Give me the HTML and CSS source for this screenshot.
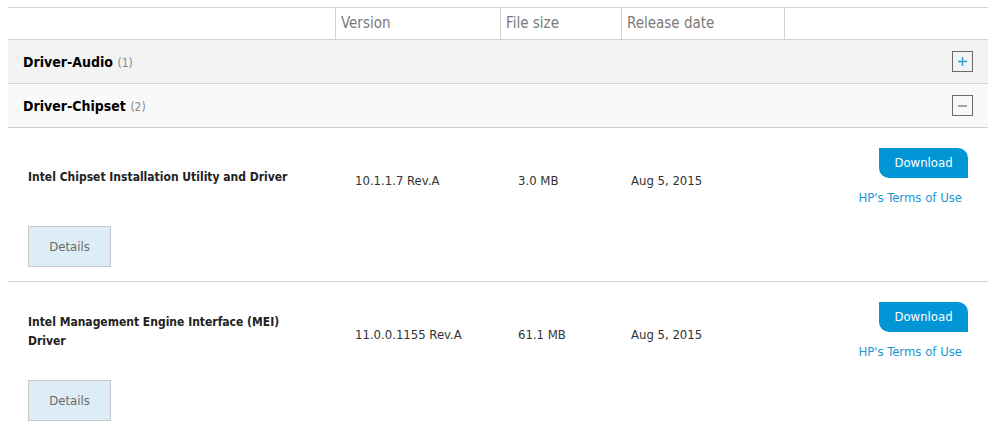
FILE: index.html
```html
<!DOCTYPE html>
<html lang="en">
<head>
<meta charset="utf-8">
<title>Drivers</title>
<link rel="stylesheet" href="styles.css">
</head>
<body>
<div class="drivers">
  <div class="thead">
    <div class="th"></div>
    <div class="th">Version</div>
    <div class="th">File size</div>
    <div class="th">Release date</div>
    <div class="th"></div>
  </div>

  <div class="group group-closed">
    <div class="group-title"><span class="group-name">Driver-Audio</span> <span class="count">(1)</span></div>
    <span class="toggle">
      <svg width="21" height="21" viewBox="0 0 21 21"><rect x="0.5" y="0.5" width="20" height="20" fill="none" stroke="#6b6b6b"/><path d="M6 10.5h9M10.5 6v9" stroke="#2a9fd8" stroke-width="1.5"/></svg>
    </span>
  </div>

  <div class="group group-open">
    <div class="group-title"><span class="group-name">Driver-Chipset</span> <span class="count">(2)</span></div>
    <span class="toggle">
      <svg width="21" height="21" viewBox="0 0 21 21"><rect x="0.5" y="0.5" width="20" height="20" fill="none" stroke="#6b6b6b"/><path d="M6 11h9" stroke="#8a8a8a" stroke-width="1.5"/></svg>
    </span>
  </div>

  <div class="item">
    <div class="item-main">
      <div class="c-name">Intel Chipset Installation Utility and Driver</div>
      <div class="c-ver">10.1.1.7 Rev.A</div>
      <div class="c-size">3.0 MB</div>
      <div class="c-date">Aug 5, 2015</div>
      <div class="c-actions">
        <a class="btn-download" href="#">Download</a>
        <a class="terms" href="#">HP's Terms of Use</a>
      </div>
    </div>
    <button class="btn-details" type="button">Details</button>
  </div>

  <div class="item">
    <div class="item-main">
      <div class="c-name">Intel Management Engine Interface (MEI) Driver</div>
      <div class="c-ver">11.0.0.1155 Rev.A</div>
      <div class="c-size">61.1 MB</div>
      <div class="c-date">Aug 5, 2015</div>
      <div class="c-actions">
        <a class="btn-download" href="#">Download</a>
        <a class="terms" href="#">HP's Terms of Use</a>
      </div>
    </div>
    <button class="btn-details" type="button">Details</button>
  </div>
</div>
</body>
</html>
```

FILE: styles.css
```css
* { box-sizing: border-box; }

body {
  margin: 0;
  background: #fff;
  font-family: "DejaVu Sans Condensed", "DejaVu Sans", sans-serif;
  color: #333;
}

.drivers {
  margin: 7px 8px 0;
  width: 980px;
  border-top: 1px solid #d2d2d2;
}

.thead {
  display: grid;
  grid-template-columns: 327px 165px 121px 163px 1fr;
  height: 32px;
  border-bottom: 1px solid #d2d2d2;
}

.th {
  padding-left: 5px;
  font-size: 15px;
  line-height: 31px;
  color: #7a7a7a;
}

.th + .th {
  border-left: 1px solid #d2d2d2;
}

.group {
  display: flex;
  align-items: center;
  justify-content: space-between;
  height: 44px;
  padding: 0 15px;
  border-bottom: 1px solid #d2d2d2;
}

.group-closed { background: #f3f3f3; }
.group-open { background: #f9f9f9; }

.group-name {
  font-weight: bold;
  font-size: 14px;
  color: #000;
}

.count {
  font-size: 12px;
  color: #888;
}

.toggle {
  display: flex;
  width: 21px;
  height: 21px;
}

.item {
  padding: 20px 0 14px;
  border-bottom: 1px solid #d2d2d2;
}

.item-main {
  display: grid;
  grid-template-columns: 327px 165px 121px 163px 1fr;
  align-items: center;
  font-size: 13px;
}

.c-name {
  padding: 0 30px 0 20px;
  font-weight: bold;
  font-size: 12px;
  line-height: 19px;
  color: #222;
}

.c-ver { padding-left: 20px; padding-top: 6px; }
.c-size { padding-left: 18px; padding-top: 6px; }
.c-date { padding-left: 10px; padding-top: 6px; }

.c-actions {
  display: flex;
  flex-direction: column;
  align-items: flex-end;
  padding-right: 20px;
}

.btn-download {
  display: block;
  width: 89px;
  height: 30px;
  line-height: 30px;
  text-align: center;
  background: #0096d6;
  color: #fff;
  text-decoration: none;
  font-size: 13px;
  border-radius: 0 10px 0 10px;
}

.terms {
  margin-top: 11px;
  margin-right: 6px;
  line-height: 18px;
  color: #1a97d5;
  text-decoration: none;
  font-size: 13px;
}

.btn-details {
  display: block;
  margin: 19px 0 0 20px;
  width: 83px;
  height: 41px;
  background: #dcedf8;
  border: 1px solid #c8c8c8;
  color: #6a6a6a;
  font-family: inherit;
  font-size: 13px;
  padding: 0;
}
```
